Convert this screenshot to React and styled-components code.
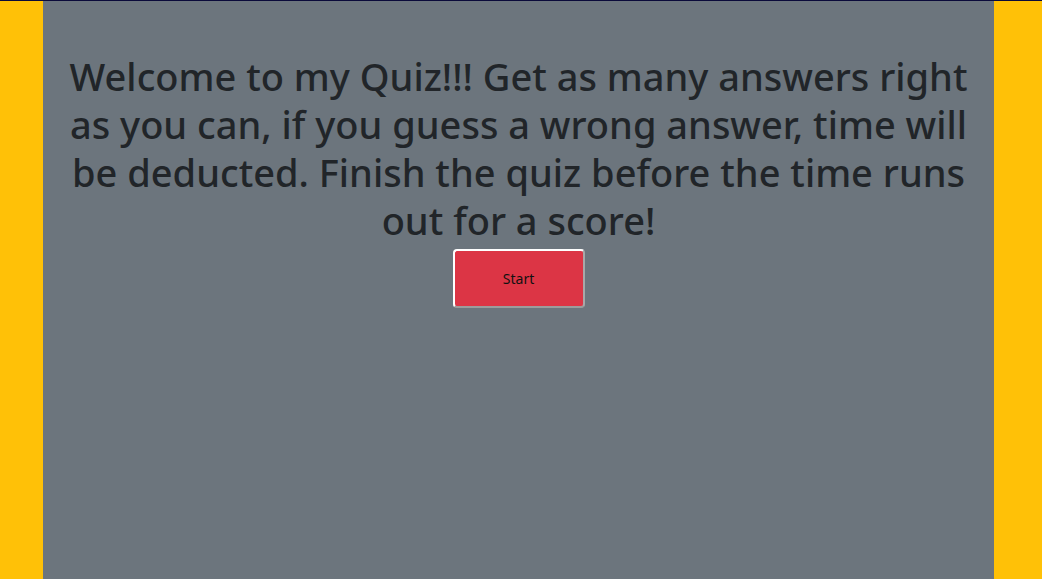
import React from 'react'
import styled, { createGlobalStyle } from 'styled-components'

const GlobalStyle = createGlobalStyle`
  html, body {
    margin: 0;
    padding: 0;
    height: 100%;
    background-color: #ffc107;
  }
  #root {
    height: 100%;
  }
`

const Page = styled.div`
  height: 100%;
  display: flex;
  flex-direction: column;
  border-top: 1px solid #0a0a3a;
  box-sizing: border-box;
`

const Main = styled.main`
  flex: 1;
  width: 951px;
  margin-left: 43px;
  background-color: #6c757d;
  padding: 0 15px;
  box-sizing: border-box;
  display: flex;
  flex-direction: column;
  align-items: center;
`

const Heading = styled.h1`
  margin: 51px 0 5px;
  font-family: "Noto Sans", "Open Sans", sans-serif;
  font-weight: 500;
  font-size: 38px;
  line-height: 48px;
  color: #212529;
  text-align: center;
`

const StartButton = styled.button`
  width: 132px;
  height: 59px;
  background-color: #dc3545;
  color: #111;
  font-family: "Noto Sans", "Open Sans", sans-serif;
  font-size: 14px;
  border-radius: 4px;
  border: 2px solid #fff;
  border-right-color: #a8a8a8;
  border-bottom-color: #9c9c9c;
  cursor: pointer;
`

const App = () => {
  return (
    <>
      <GlobalStyle />
      <Page>
        <Main>
          <Heading>
            Welcome to my Quiz!!! Get as many answers right as you can, if you guess a wrong answer, time will be deducted. Finish the quiz before the time runs out for a score!
          </Heading>
          <StartButton>Start</StartButton>
        </Main>
      </Page>
    </>
  )
}

export default App
